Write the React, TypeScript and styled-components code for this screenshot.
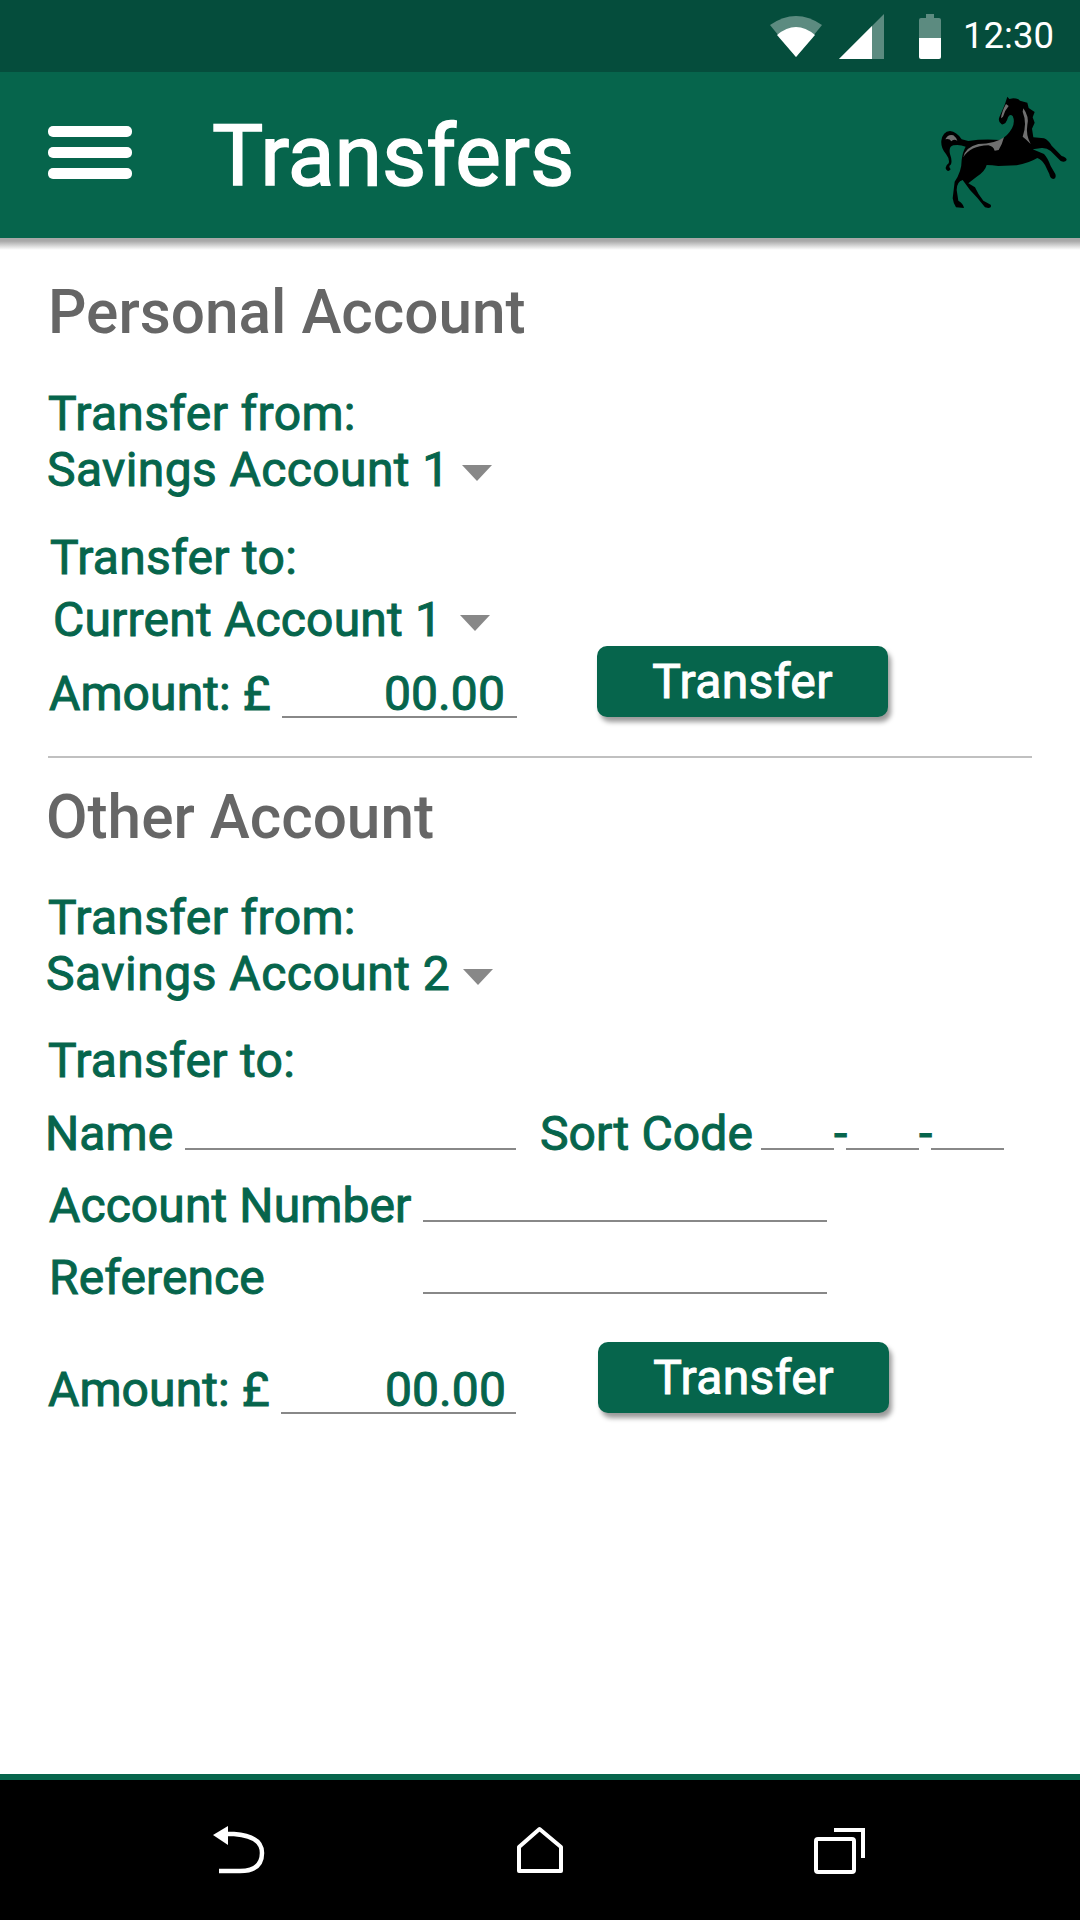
import React from 'react';
import styled, {createGlobalStyle, css} from 'styled-components';

const GREEN = '#06654c';

const GlobalStyle = createGlobalStyle`
  html, body {
    margin: 0;
    padding: 0;
    background: #fff;
  }
  * {
    box-sizing: border-box;
  }
`;

const Horse = () => (
    <svg viewBox="0 0 480 420" width="160" height="140">
        <path
            fill="#000"
            d="M262 50 L268 57 L280 55 Q295 55 300 62 L322 68 L326 84 L344 96 L338 112 L344 128 L336 146 L340 172
            L372 175 Q385 180 395 197 L425 228 Q440 232 440 240 Q435 248 422 243 L392 213 Q380 203 365 204 L338 208
            L372 222 Q384 235 392 258 L406 282 Q410 295 400 297 Q390 295 388 282 L375 255 Q365 238 352 234
            Q325 250 290 256 L235 258 Q215 255 200 255 Q195 275 170 290 L145 310 L165 322 Q175 345 190 362
            L212 374 Q216 384 205 384 L195 382 Q175 355 150 330 L128 300 Q110 305 110 330 L115 362 Q130 370 132 384
            L108 382 Q100 370 98 355 L104 305 Q125 275 125 240 Q128 215 137 200 Q118 192 100 196 Q85 200 90 222
            Q98 245 92 254 Q84 258 92 268 Q84 278 78 268 Q74 258 86 250 Q90 238 78 222 Q62 205 64 182 Q68 155 90 153
            Q110 155 125 178 L145 183 Q190 176 240 180 Q262 170 276 145 Q286 125 278 108 Q270 100 264 112 Q258 135 245 133
            Q233 125 238 112 L255 72 Z"
        />
        <path fill="#707070" d="M310 85 Q328 110 322 135 Q317 165 332 192 Q316 176 308 170 Q322 130 308 95 Z"/>
        <path fill="#707070" d="M258 72 Q245 95 243 115 L249 110 Q255 90 266 78 Z"/>
        <path
            fill="#707070"
            d="M130 232 Q135 202 175 192 Q225 192 252 172 Q246 195 236 210 L224 212 Q220 199 205 196 Q150 198 130 232 Z"
        />
        <path fill="#707070" d="M76 178 Q84 162 100 166 Q108 172 112 182 Q100 176 94 184 Q88 174 76 178 Z"/>
    </svg>
);

const Caret = ({gap}: { gap: number }) => (
    <CaretIcon $gap={gap} viewBox="0 0 30 16" width="30" height="16">
        <path fill="#888" d="M0 0 H30 L15 16 Z"/>
    </CaretIcon>
);

type AmountRowProps = { indent: number; width: number; top: number; pad: number };

const AmountRow = ({indent, width, top, pad}: AmountRowProps) => (
    <ActionRow $top={top}>
        <AmountField $indent={indent} $width={width}>
            <FieldText>Amount: £</FieldText>
            <AmountValue $pad={pad}>00.00</AmountValue>
        </AmountField>
        <TransferButton>Transfer</TransferButton>
    </ActionRow>
);

const App = () => {
    return (
        <Page>
            <GlobalStyle/>
            <StatusBar>
                <svg viewBox="0 0 52 41" width="52" height="41">
                    <path fill="#fff" opacity=".35" d="M0 9 Q26 -9 52 9 L26 41 Z"/>
                    <path fill="#fff" d="M7 19 Q26 3 45 19 L26 41 Z"/>
                </svg>
                <SignalIcon viewBox="0 0 45 45" width="45" height="45">
                    <path fill="#fff" opacity=".35" d="M0 45 L45 0 V45 Z"/>
                    <path fill="#fff" d="M0 45 L33 12 V45 Z"/>
                </SignalIcon>
                <BatteryIcon viewBox="0 0 22 45" width="22" height="45">
                    <path fill="#fff" opacity=".35" d="M7 0 H15 V4 H20 Q22 4 22 6 V24 H0 V6 Q0 4 2 4 H7 Z"/>
                    <path fill="#fff" d="M0 24 H22 V43 Q22 45 20 45 H2 Q0 45 0 43 Z"/>
                </BatteryIcon>
                <Clock>12:30</Clock>
            </StatusBar>
            <AppBar>
                <Burger>
                    <BurgerLine/>
                    <BurgerLine/>
                    <BurgerLine/>
                </Burger>
                <Title>Transfers</Title>
                <Logo><Horse/></Logo>
            </AppBar>
            <BarShadow/>
            <Main>
                <SectionTitle $indent={0} $top={29}>Personal Account</SectionTitle>
                <Line $indent={0} $top={39} $spacing={.35}>Transfer from:</Line>
                <Line $indent={-1} $top={0} $spacing={.4}>Savings Account 1 <Caret gap={0}/></Line>
                <Line $indent={2} $top={32} $spacing={.3}>Transfer to:</Line>
                <Line $indent={5} $top={6} $spacing={.2}>Current Account 1 <Caret gap={6}/></Line>
                <AmountRow indent={1} width={549} top={-2} pad={12}/>
                <Divider/>
                <SectionTitle $indent={-2} $top={26}>Other Account</SectionTitle>
                <Line $indent={0} $top={38} $spacing={.35}>Transfer from:</Line>
                <Line $indent={-2} $top={0} $spacing={.5}>Savings Account 2 <Caret gap={0}/></Line>
                <Line $indent={0} $top={31} $spacing={.3}>Transfer to:</Line>
                <FormRow $top={29}>
                    <FormLabel $width={140} $indent={-3}>Name</FormLabel>
                    <Blank $width={331}/>
                    <SortLabel>Sort Code</SortLabel>
                    <Blank $width={73}/>
                    <Dash>-</Dash>
                    <Blank $width={73}/>
                    <Dash>-</Dash>
                    <Blank $width={73}/>
                </FormRow>
                <FormRow $top={40}>
                    <FormLabel $width={375} $indent={1}>Account Number</FormLabel>
                    <Blank $width={404}/>
                </FormRow>
                <FormRow $top={40}>
                    <FormLabel $width={375} $indent={1}>Reference</FormLabel>
                    <Blank $width={404}/>
                </FormRow>
                <AmountRow indent={0} width={550} top={48} pad={10}/>
            </Main>
            <NavBar>
                <svg viewBox="0 0 56 48" width="56" height="48">
                    <path fill="#fff" d="M3 9 L18 0 V19 Z"/>
                    <path
                        fill="none" stroke="#fff" strokeWidth="4.5"
                        d="M16 8 H24 Q52 10 52 27 Q52 45 30 45 H9"
                    />
                </svg>
                <svg viewBox="0 0 48 48" width="48" height="48">
                    <path
                        fill="none" stroke="#fff" strokeWidth="4" strokeLinejoin="round"
                        d="M23.5 3 L45 21 V45 H3 V21 Z"
                    />
                </svg>
                <svg viewBox="0 0 52 48" width="52" height="48">
                    <rect x="2" y="13" width="38" height="33" rx="2" fill="none" stroke="#fff" strokeWidth="4"/>
                    <path fill="none" stroke="#fff" strokeWidth="4" d="M20 4 H49 V32"/>
                </svg>
            </NavBar>
        </Page>
    );
};

export default App;

// the labels sit between Roboto regular and medium in the picture
const labelText = css`
  font-size: 48px;
  font-weight: 400;
  letter-spacing: .1px;
  -webkit-text-stroke: 1px currentColor;
`

const Page = styled.div`
  width: 1080px;
  height: 1920px;
  display: flex;
  flex-direction: column;
  background: #fff;
  font-family: Roboto, "Liberation Sans", sans-serif;
  color: ${GREEN};
`

const StatusBar = styled.div`
  height: 72px;
  flex: none;
  display: flex;
  align-items: center;
  justify-content: flex-end;
  padding-right: 26px;
  background: #054d3c;
`

const SignalIcon = styled.svg`
  margin-left: 17px;
`

const BatteryIcon = styled.svg`
  margin-left: 35px;
`

const Clock = styled.span`
  margin-left: 22px;
  font-size: 36.5px;
  line-height: 72px;
  color: #fff;
`

const AppBar = styled.header`
  height: 166px;
  flex: none;
  display: flex;
  align-items: center;
  padding-left: 48px;
  background: ${GREEN};
`

const Burger = styled.div`
  width: 84px;
  margin-bottom: 6px;
  display: flex;
  flex-direction: column;
  gap: 10px;
`

const BurgerLine = styled.span`
  height: 11px;
  border-radius: 5px;
  background: #fff;
`

const Title = styled.h1`
  margin: 2px 0 0 80px;
  font-size: 86px;
  font-weight: 400;
  line-height: 100px;
  color: #fff;
  -webkit-text-stroke: 1.5px currentColor;
`

const Logo = styled.div`
  margin: 0 0 10px auto;
  height: 140px;
`

const BarShadow = styled.div`
  height: 12px;
  flex: none;
  background: linear-gradient(#a8a8a8 25%, #fff);
`

const Main = styled.main`
  flex: 1;
  padding-left: 48px;
`

const SectionTitle = styled.h2<{ $indent: number; $top: number }>`
  margin: ${p => p.$top}px 0 0 ${p => p.$indent}px;
  font-size: 60.3px;
  font-weight: 500;
  line-height: 68px;
  color: #666;
`

const Line = styled.div<{ $indent: number; $top: number; $spacing: number }>`
  margin: ${p => p.$top}px 0 0 ${p => p.$indent}px;
  ${labelText}
  letter-spacing: ${p => p.$spacing}px;
  line-height: 56px;
  white-space: pre;
`

const CaretIcon = styled.svg<{ $gap: number }>`
  margin-left: ${p => p.$gap}px;
  vertical-align: 5px;
`

const ActionRow = styled.div<{ $top: number }>`
  margin-top: ${p => p.$top}px;
  display: flex;
  align-items: flex-end;
`

const AmountField = styled.div<{ $indent: number; $width: number }>`
  width: ${p => p.$width}px;
  padding-left: ${p => p.$indent}px;
  display: flex;
  align-items: baseline;
  ${labelText}
`

const FieldText = styled.span`
  width: 233px;
  line-height: 40px;
  white-space: pre;
`

const AmountValue = styled.span<{ $pad: number }>`
  width: 235px;
  padding: 0 ${p => p.$pad}px 2px 0;
  border-bottom: 2px solid #888;
  line-height: 40px;
  text-align: right;
`

const TransferButton = styled.button`
  width: 291px;
  height: 71px;
  margin-bottom: 1px;
  padding: 0;
  border: 0;
  border-radius: 10px;
  background: ${GREEN};
  box-shadow: 3px 5px 5px rgba(0, 0, 0, .4);
  font-family: inherit;
  ${labelText}
  letter-spacing: .4px;
  color: #fff;
`

const Divider = styled.hr`
  width: 984px;
  height: 2px;
  margin: 38px 0 0;
  border: 0;
  background: #c0c0c0;
`

const FormRow = styled.div<{ $top: number }>`
  margin-top: ${p => p.$top}px;
  display: flex;
  align-items: flex-end;
  height: 32px;
  ${labelText}
  line-height: 32px;
`

const FormLabel = styled.span<{ $width: number; $indent: number }>`
  width: ${p => p.$width}px;
  padding-left: ${p => Math.max(p.$indent, 0)}px;
  margin-left: ${p => Math.min(p.$indent, 0)}px;
  white-space: pre;
`

const SortLabel = styled.span`
  width: 245px;
  padding-left: 24px;
  white-space: pre;
`

const Blank = styled.span<{ $width: number }>`
  width: ${p => p.$width}px;
  height: 2px;
  background: #888;
`

const Dash = styled.span`
  width: 12px;
  text-align: center;
`

const NavBar = styled.nav`
  height: 146px;
  flex: none;
  display: flex;
  align-items: center;
  justify-content: space-between;
  padding: 0 214px 0 210px;
  border-top: 6px solid ${GREEN};
  background: #000;
`
